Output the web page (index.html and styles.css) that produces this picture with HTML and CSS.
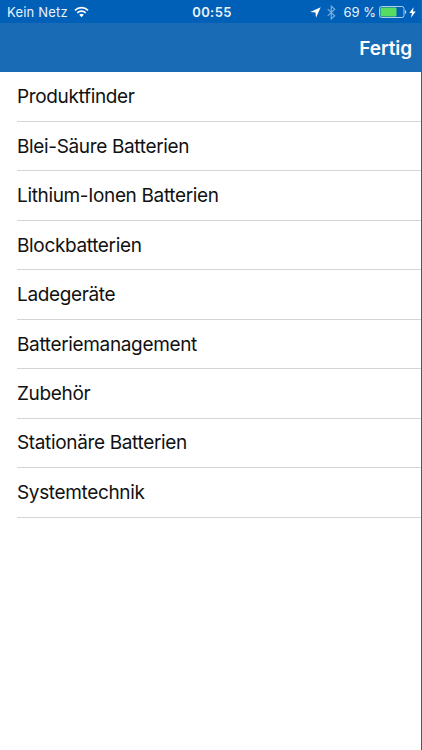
FILE: index.html
```
<!DOCTYPE html>
<html lang="de">
<head>
  <meta charset="UTF-8">
  <meta name="viewport" content="width=device-width, initial-scale=1">
  <title>Menü</title>
  <link rel="stylesheet" href="styles.css">
</head>
<body>

<!-- status bar -->
<div class="status">
  <div class="status-left">
    <span class="carrier">Kein Netz</span>
    <svg class="wifi" width="15" height="12" viewBox="0 0 15 12">
      <path d="M1 4.4a9.2 9.2 0 0 1 13 0M3.3 6.8a6 6 0 0 1 8.4 0" fill="none" stroke="#fff" stroke-width="1.7"/>
      <path d="M5.2 8.8a3.3 3.3 0 0 1 4.6 0L7.5 11.3z" fill="#fff"/>
    </svg>
  </div>
  <span class="clock">00:55</span>
  <div class="status-right">
    <svg class="location" width="11" height="11" viewBox="0 0 11 11">
      <path d="M10.7.2L6 10.7 5.5 5.5.2 5z" fill="#fff"/>
    </svg>
    <svg class="bluetooth" width="9" height="15" viewBox="0 0 9 15">
      <path d="M.7 4.1l7 6.7-3.4 3.1V1.1l3.4 3.1-7 6.7" fill="none" stroke="#78abdc" stroke-width="1.2"/>
    </svg>
    <span class="percent">69 %</span>
    <svg class="battery" width="28" height="12" viewBox="0 0 28 12">
      <rect x=".5" y=".5" width="24.5" height="11" rx="2" fill="none" stroke="#a9cbec"/>
      <rect x="1.5" y="1.5" width="16" height="9" rx="1" fill="#58db63"/>
      <path d="M26 4c1.7.5 1.7 3.5 0 4z" fill="#a9cbec"/>
    </svg>
    <svg class="bolt" width="7" height="11" viewBox="0 0 7 11">
      <path d="M4.6.3L.3 6h2.6L2 10.7 6.7 4.6H4z" fill="#fff"/>
    </svg>
  </div>
</div>

<header>
  <a class="done">Fertig</a>
</header>

<ul class="menu">
  <li><span class="label">Produktfinder</span></li>
  <li><span class="label">Blei-Säure Batterien</span></li>
  <li><span class="label">Lithium-Ionen Batterien</span></li>
  <li><span class="label">Blockbatterien</span></li>
  <li><span class="label">Ladegeräte</span></li>
  <li><span class="label">Batteriemanagement</span></li>
  <li><span class="label">Zubehör</span></li>
  <li><span class="label">Stationäre Batterien</span></li>
  <li><span class="label">Systemtechnik</span></li>
</ul>

</body>
</html>
```

FILE: styles.css
```
:root {
  --status: #0060b8;
  --primary: #1a6bb5;
  --line: #d5d5d7;
}
* { box-sizing: border-box; margin: 0; padding: 0; }
body {
  height: 750px;
  border-right: 1px solid #55565a;
  background: #fff;
  color: #111;
  font-family: Inter, "Liberation Sans", sans-serif;
  overflow: hidden;
}
svg { display: block; flex: none; }

/* status bar */
.status {
  height: 23px;
  padding: 1px 5px 0 7px;
  display: grid;
  grid-template-columns: 1fr auto 1fr;
  align-items: center;
  background: var(--status);
  color: #eaf3fc;
  font-size: 13px;
  white-space: nowrap;
}
.status-left,
.status-right { display: flex; align-items: center; }
.status-right { justify-content: flex-end; }
.carrier { letter-spacing: .2px; }
.wifi { margin-left: 6px; }
.clock { padding-left: 1px; font-weight: 600; letter-spacing: .4px; }
.bluetooth { margin-left: 6px; }
.percent { margin-left: 7px; }
.battery { margin-left: 3px; }
.bolt { margin-left: 2px; }

/* nav bar */
header {
  height: 49px;
  padding: 1px 9px 0 0;
  display: flex;
  align-items: center;
  justify-content: flex-end;
  background: var(--primary);
}
.done { color: #fff; font-size: 19px; font-weight: 600; letter-spacing: -.1px; }

/* menu list */
.menu { list-style: none; padding: .6px 0 0 17px; }
.menu li {
  height: 49.45px;
  display: flex;
  align-items: center;
  border-bottom: 1px solid var(--line);
}
.label { font-size: 19px; letter-spacing: -.35px; }
```
